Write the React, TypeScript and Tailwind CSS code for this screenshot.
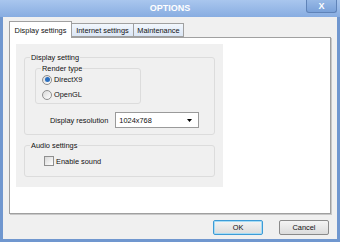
import { useState } from "react"

const font = { fontFamily: "'Liberation Sans', Arial, sans-serif" }

function GroupBox({ label, className, children }: { label: string; className?: string; children: React.ReactNode }) {
  return (
    <div className={`relative border border-[#dcdcdc] rounded-[3px] ${className ?? ""}`}>
      <span className="absolute -top-[5px] left-[5px] bg-[#f0f0f0] px-[1px] leading-[9px]">{label}</span>
      {children}
    </div>
  )
}

function Radio({ checked, label }: { checked?: boolean; label: string }) {
  return (
    <div className="flex items-center gap-[2px] h-[15px]">
      <span className="w-[10px] h-[10px] rounded-full border border-[#8f8f8f] bg-gradient-to-br from-[#d8d8d8] to-white flex items-center justify-center">
        {checked && <span className="w-[5px] h-[5px] rounded-full bg-[#2a6fc0]" />}
      </span>
      <span>{label}</span>
    </div>
  )
}

export default function App() {
  const [sound, setSound] = useState(false)

  return (
    <div
      className="w-[340px] h-[242px] flex flex-col bg-[#7097cf] text-[7.4px] leading-[9px] text-[#111] overflow-hidden"
      style={font}
    >
      {/* Title bar */}
      <div className="h-[17px] relative flex items-center justify-center bg-gradient-to-b from-[#a9c6ee] to-[#88ade1]">
        <span className="text-white font-bold text-[9px]">OPTIONS</span>
        <div className="absolute right-[3px] top-0 w-[31px] h-[13px] border border-[#5f83b8] border-t-0 rounded-b-[3px] bg-gradient-to-b from-[#98b9e6] to-[#7aa1d9] flex items-center justify-center">
          <span className="text-white font-bold text-[9px]">X</span>
        </div>
      </div>

      {/* Body */}
      <div className="flex-1 mx-[3px] mb-[3px] bg-[#f0f0f0] flex flex-col px-[6px] pt-[4px]">
        {/* Tabs */}
        <div className="flex items-end h-[16px] relative z-10">
          <div className="w-[63px] h-[17px] -mb-[1px] bg-white border border-[#a0a0a0] border-b-0 flex items-center justify-center">
            Display settings
          </div>
          <div className="w-[62px] h-[14px] bg-gradient-to-b from-[#f2f7fd] to-[#dbe6f5] border border-[#a0a0a0] border-l-0 flex items-center justify-center">
            Internet settings
          </div>
          <div className="w-[50px] h-[14px] bg-gradient-to-b from-[#f2f7fd] to-[#dbe6f5] border border-[#a0a0a0] border-l-0 flex items-center justify-center">
            Maintenance
          </div>
        </div>

        {/* Panel */}
        <div className="h-[177px] bg-white border border-[#a0a0a0] shadow-[1px_1px_0_#c8c8c8] pl-[6px] pt-[6px]">
          <div className="w-[207px] h-[143px] bg-[#f0f0f0] px-[8px] pt-[13px]">
            <GroupBox label="Display setting" className="h-[78px] pt-[10px] pl-[10px]">
              <GroupBox label="Render type" className="w-[106px] h-[36px] pt-[3px] pl-[6px]">
                <Radio checked label="DirectX9" />
                <Radio label="OpenGL" />
              </GroupBox>
              <div className="flex items-center mt-[8px] pl-[15px] gap-[7px]">
                <span>Display resolution</span>
                <div className="w-[84px] h-[16px] bg-white border border-[#9a9a9a] flex items-center justify-between pl-[3px] pr-[6px]">
                  <span>1024x768</span>
                  <svg width="5" height="3" viewBox="0 0 5 3">
                    <path d="M0 0H5L2.5 3Z" fill="#000" />
                  </svg>
                </div>
              </div>
            </GroupBox>
            <GroupBox label="Audio settings" className="mt-[10px] h-[32px] pt-[10px] pl-[19px]">
              <label className="flex items-center gap-[2px]">
                <span
                  className="w-[10px] h-[10px] border border-[#8f8f8f] bg-gradient-to-br from-[#d8d8d8] to-white"
                  onClick={() => setSound(!sound)}
                />
                <span>Enable sound</span>
              </label>
            </GroupBox>
          </div>
        </div>

        {/* Buttons */}
        <div className="flex justify-end gap-[16px] mt-[6px] pr-[2px]">
          <button className="w-[50px] h-[15px] border border-[#3d9bd6] rounded-[2px] bg-gradient-to-b from-[#f4f4f4] to-[#dcdcdc] shadow-[inset_0_0_0_1px_#a6dcf5]">
            OK
          </button>
          <button className="w-[50px] h-[15px] border border-[#8a8a8a] rounded-[2px] bg-gradient-to-b from-[#f4f4f4] to-[#dcdcdc]">
            Cancel
          </button>
        </div>
      </div>
    </div>
  )
}
